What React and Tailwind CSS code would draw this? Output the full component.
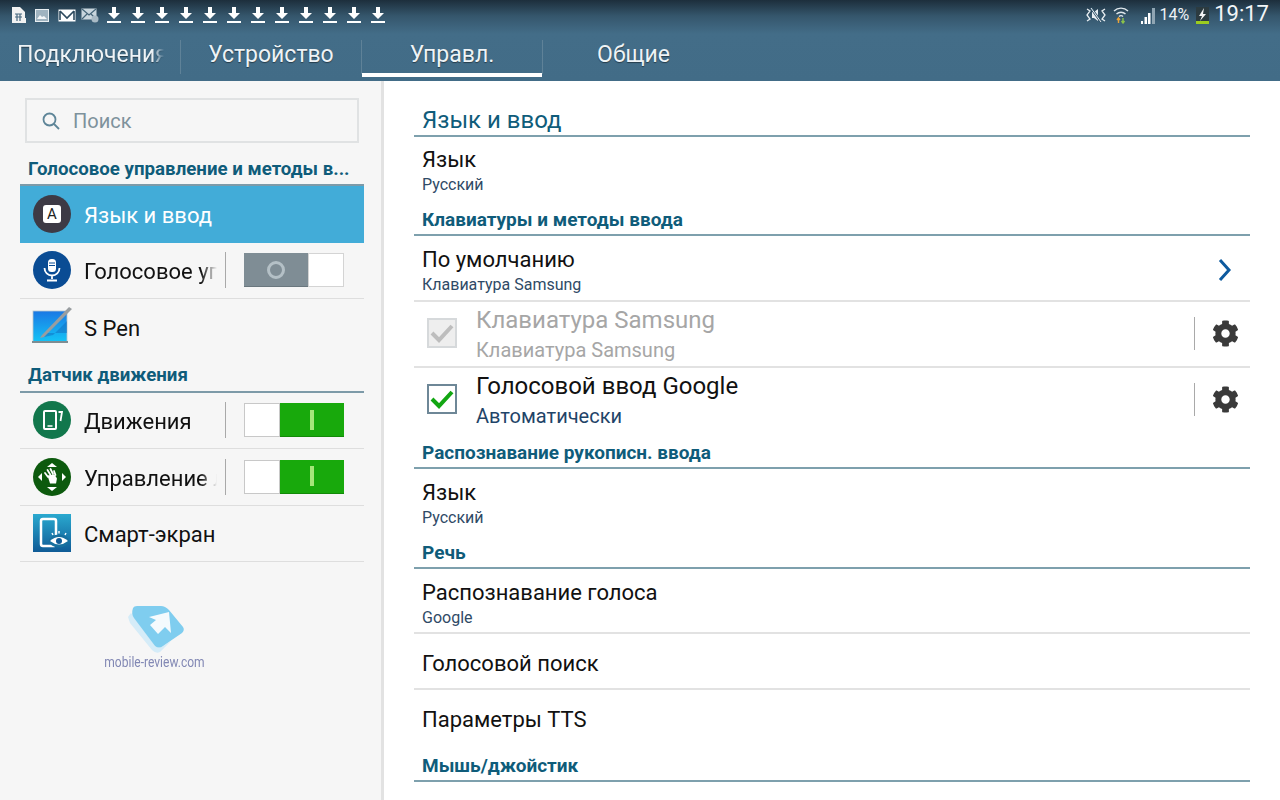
import { FaCog } from "react-icons/fa";

const downloads = Array.from({ length: 12 }, (_, i) => i);

function DownloadIcon() {
  return (
    <svg width="14" height="18" viewBox="0 0 14 18" className="shrink-0">
      <path d="M5 1h4v6h4l-6 6-6-6h4z" fill="#fff" />
      <rect x="0" y="15" width="14" height="2" fill="#fff" />
    </svg>
  );
}

function StatusBar() {
  return (
    <div className="flex h-[30px] items-center justify-between pl-[11px] pr-[11px]">
      <div className="flex items-center">
        <svg width="16" height="18" viewBox="0 0 16 18" className="mr-[8px]">
          <path d="M1 1h8l5 5v11H1z" fill="#f2f2f2" />
          <path d="M4 8h7M4 11h7M6 8v7M9 8v7" stroke="#47687f" strokeWidth="1.2" />
          <rect x="13" y="12" width="2" height="5" fill="#f2f2f2" />
        </svg>
        <svg width="14" height="13" viewBox="0 0 14 13" className="mr-[9px]">
          <rect x="0.5" y="0.5" width="13" height="12" fill="#9fb3c0" stroke="#e8eef2" />
          <path d="M2 10l3-4 2 2 2-1 3 3z" fill="#f2f5f7" />
        </svg>
        <svg width="18" height="13" viewBox="0 0 18 13" className="mr-[5px]">
          <rect x="0.5" y="0.5" width="17" height="12" fill="#fff" />
          <path d="M2 2v9M16 2v9M2 2l7 7 7-7" stroke="#2d4a5e" strokeWidth="1.6" fill="none" />
        </svg>
        <svg width="18" height="15" viewBox="0 0 18 15" className="mr-[8px]">
          <rect x="0.5" y="0.5" width="15" height="11" fill="#c9d6de" />
          <path d="M1 1l7 6 7-6M1 11l5-5M15 11l-5-5" stroke="#456579" strokeWidth="1.2" fill="none" />
          <circle cx="14" cy="11" r="3.5" fill="#a9bac5" />
        </svg>
        <div className="flex gap-[10px]">
          {downloads.map((i) => (
            <DownloadIcon key={i} />
          ))}
        </div>
      </div>
      <div className="flex items-center">
        <svg width="20" height="16" viewBox="0 0 20 16" className="mr-[7px]">
          <path d="M1 2l3 2-3 4 3 4-3 2M19 2l-3 2 3 4-3 4 3 2" stroke="#e8eef2" strokeWidth="1.3" fill="none" />
          <path d="M6 5h2l4-3v12l-4-3H6z" fill="#e8eef2" />
          <path d="M5 1l10 14" stroke="#35566c" strokeWidth="2.4" />
          <path d="M5 1l10 14" stroke="#e8eef2" strokeWidth="1" />
        </svg>
        <svg width="16" height="18" viewBox="0 0 16 18" className="mr-[11px]">
          <path d="M1 5a10 10 0 0 1 14 0M3.5 8a6.5 6.5 0 0 1 9 0M6 10.500a3 3 0 0 1 4 0" stroke="#dfe7ec" strokeWidth="1.4" fill="none" />
          <path d="M5.500 12v5M4 14l1.500-2 1.500 2" stroke="#e8a33a" strokeWidth="1.4" fill="none" />
          <path d="M10 12v5M8.500 15l1.500 2 1.500-2" stroke="#8bc24a" strokeWidth="1.4" fill="none" />
        </svg>
        <svg width="16" height="17" viewBox="0 0 16 17" className="mr-[4px]">
          <path d="M1 14h2v3H1zM4.500 10h2.500v7H4.500zM8 6h2.500v11H8z" fill="#fff" />
          <path d="M12 1h3v16h-3z" fill="#8fa5b3" />
        </svg>
        <span className="mr-[6px] text-[16px] leading-none text-[#eef3f6]">14%</span>
        <svg width="15" height="18" viewBox="0 0 15 18" className="mr-[4px]">
          <rect x="1" y="1" width="13" height="16" fill="#2c3b40" />
          <path d="M9 2L4 10h3l-2 5 6-7H8z" fill="#f4f4f4" />
          <rect x="1" y="15" width="13" height="3" fill="#9ccb1e" />
        </svg>
        <span className="pb-[2px] text-[22px] leading-none text-[#f2f6f8]">19:17</span>
      </div>
    </div>
  );
}

function TabDivider() {
  return <div className="mt-[10px] h-[34px] w-px shrink-0 bg-[#5f8298]" />;
}

function Tabs() {
  return (
    <div className="flex h-[51px] text-[23px] text-[#eef3f6] [text-shadow:0_1px_1px_rgba(0,0,0,0.45)]">
      <div className="flex h-[47px] w-[181px]">
        <div className="flex flex-1 items-center pl-[17px] pt-[3px]">
          <span className="w-[147px] overflow-hidden whitespace-nowrap [mask-image:linear-gradient(to_right,black_92%,transparent)]">
            Подключения
          </span>
        </div>
        <TabDivider />
      </div>
      <div className="flex h-[47px] w-[181px]">
        <div className="flex flex-1 items-center justify-center pt-[3px]">Устройство</div>
        <TabDivider />
      </div>
      <div className="flex h-[47px] w-[181px]">
        <div className="flex flex-1 items-center justify-center border-b-4 border-white pt-[7px]">Управл.</div>
        <TabDivider />
      </div>
      <div className="flex h-[47px] w-[181px] items-center justify-center pt-[3px]">Общие</div>
    </div>
  );
}

function Toggle({ on }) {
  if (on) {
    return (
      <div className="flex h-[34px] w-[100px] shrink-0">
        <div className="w-[36px] border border-[#c8c8c8] bg-white" />
        <div className="flex flex-1 items-center justify-center border-b border-[#128a08] bg-[#18a90c]">
          <div className="h-[20px] w-[4px] bg-[#a4e67a]" />
        </div>
      </div>
    );
  }
  return (
    <div className="flex h-[34px] w-[100px] shrink-0">
      <div className="flex w-[64px] items-center justify-center border-b border-[#6a777e] bg-[#7f8d95]">
        <div className="h-[18px] w-[18px] rounded-full border-[3px] border-[#b4c0c6]" />
      </div>
      <div className="flex-1 border border-[#d4d4d4] bg-white" />
    </div>
  );
}

function SideRow({ icon, label, toggle, selected, clip, noBorder }) {
  return (
    <div
      className={
        "flex h-[56.500px] items-center pl-[12px] " +
        (selected ? "bg-[#42acd8] text-white" : "text-[#111] ") +
        (selected || noBorder ? "" : "border-b border-[#dedede]")
      }
    >
      <div className="flex h-[40px] w-[40px] shrink-0 items-center justify-center">{icon}</div>
      <div
        className={
          "ml-[12px] whitespace-nowrap pt-[3px] text-[22px] " +
          (clip ? "w-[133px] overflow-hidden [mask-image:linear-gradient(to_right,black_88%,transparent)]" : "")
        }
      >
        {label}
      </div>
      {toggle !== undefined && (
        <>
          <div className="ml-[8px] h-[36px] w-px shrink-0 bg-[#a9a9a9]" />
          <div className="ml-[18px]">
            <Toggle on={toggle} />
          </div>
        </>
      )}
    </div>
  );
}

function SideHeader({ children, className }) {
  return (
    <div
      className={
        "whitespace-nowrap border-b-2 border-[#7d9aa8] pb-[5px] pl-[8px] text-[18.700px] font-bold leading-[22px] text-[#0f5c7a] " +
        className
      }
    >
      {children}
    </div>
  );
}

function Sidebar() {
  return (
    <div className="flex w-[384px] shrink-0 flex-col border-r-[3px] border-[#e2e2e2] bg-[#f6f6f6] pl-[20px] pr-[17px] pt-[17px]">
      <div className="ml-[5px] mr-[5px] flex h-[45px] items-center border-2 border-[#e0e2e3] pl-[15px]">
        <svg width="18" height="18" viewBox="0 0 18 18" fill="none" stroke="#5e8598" strokeWidth="1.800">
          <circle cx="7.500" cy="7.500" r="6" />
          <path d="M12 12l5 5" />
        </svg>
        <span className="ml-[13px] pt-[1px] text-[20px] text-[#7e929c]">Поиск</span>
      </div>
      <SideHeader className="mt-[14px] pt-[1px] !pb-[4px]">Голосовое управление и методы в...</SideHeader>
      <SideRow
        selected
        label="Язык и ввод"
        icon={
          <div className="flex h-[38px] w-[38px] items-center justify-center rounded-full bg-[#3d3a45]">
            <div className="flex h-[18px] w-[18px] items-center justify-center rounded-[3px] bg-white text-[15px] leading-none text-[#222]">
              A
            </div>
          </div>
        }
      />
      <SideRow
        clip
        toggle={false}
        label="Голосовое управление"
        icon={
          <div className="flex h-[38px] w-[38px] items-center justify-center rounded-full bg-[#0a4c94]">
            <svg width="18" height="24" viewBox="0 0 18 24" fill="none">
              <rect x="5" y="1" width="8" height="13" rx="3.500" fill="#fff" />
              <path d="M6 5h6M6 7.500h6" stroke="#0a4c94" />
              <path d="M1.500 10a7.500 7.500 0 0 0 15 0M9 18v3M4 22.500h10" stroke="#fff" strokeWidth="1.800" />
            </svg>
          </div>
        }
      />
      <SideRow
        noBorder
        label="S Pen"
        icon={
          <svg width="42" height="42" viewBox="0 0 42 42" className="shrink-0">
            <defs>
              <linearGradient id="penBg" x1="0" y1="0" x2="0" y2="1">
                <stop offset="0" stopColor="#1a78e4" />
                <stop offset="1" stopColor="#14c4f6" />
              </linearGradient>
            </defs>
            <rect x="2" y="5" width="34" height="31" fill="url(#penBg)" stroke="#b8c6cc" strokeWidth="0.8" />
            <rect x="1" y="35" width="36" height="2" fill="#7f8d93" />
            <path d="M13 31L22 29 36 15V27H13z" fill="#0f66b8" opacity="0.45" />
            <path d="M11 29L38 1l3 2-28 28-4 1z" fill="#999da0" />
          </svg>
        }
      />
      <SideHeader className="mt-[8px]">Датчик движения</SideHeader>
      <SideRow
        toggle
        clip
        label="Движения"
        icon={
          <div className="flex h-[38px] w-[38px] items-center justify-center rounded-full bg-[#12774c]">
            <svg width="24" height="24" viewBox="0 0 24 24" fill="none" stroke="#fff">
              <rect x="4" y="3" width="12" height="18" rx="1" strokeWidth="2" />
              <path d="M7.500 18h5" strokeWidth="1.500" />
              <path d="M18.500 4H22l-1.500 9" strokeWidth="1.800" />
            </svg>
          </div>
        }
      />
      <SideRow
        toggle
        clip
        label="Управление ладонью"
        icon={
          <div className="flex h-[38px] w-[38px] items-center justify-center rounded-full bg-[#0d5a0e]">
            <svg width="34" height="34" viewBox="0 0 34 34">
              <path d="M12 7l5-4 5 4zM12 27l5 4 5-4zM7 13l-4 4 4 4zM27 13l4 4-4 4z" fill="#fff" />
              <path d="M13 17l-3-4M15.500 15l-3-5M18 14l-2.500-5M20.500 15l-1.500-4" stroke="#fff" strokeWidth="1.800" strokeLinecap="round" />
              <path d="M12.500 15.500l7-1 2.500 4-1 5h-6z" fill="#fff" />
            </svg>
          </div>
        }
      />
      <SideRow
        label="Смарт-экран"
        icon={
          <svg width="38" height="38" viewBox="0 0 38 38">
            <defs>
              <linearGradient id="smartBg" x1="0" y1="0" x2="0" y2="1">
                <stop offset="0" stopColor="#2aa9cf" />
                <stop offset="1" stopColor="#0f5b96" />
              </linearGradient>
            </defs>
            <rect x="0" y="0" width="38" height="38" fill="url(#smartBg)" />
            <rect x="8" y="5" width="15" height="27" rx="2" fill="none" stroke="#fff" strokeWidth="2.500" />
            <ellipse cx="26" cy="27" rx="10" ry="6.500" fill="#17709f" />
            <path d="M17 27q9-8 18 0q-9 7-18 0z" fill="#fff" />
            <circle cx="26" cy="27" r="3" fill="#0f5b96" />
            <path d="M20 21l-1-2M26 19.500V17M32 21l1-2" stroke="#fff" strokeWidth="1.400" />
          </svg>
        }
      />
      <div className="mt-[43px] flex flex-col items-center pr-[70px]">
        <svg width="60" height="50" viewBox="0 0 60 50">
          <path d="M1 12L4 8l24 33q4 3 8 0l8-5-11 11q-4 2-8-2L3 18z" fill="#d5ecf8" />
          <path d="M6 3q1-2 4-2h24q4 0 8 4l14 17q2 3-1 6L36 41q-4 3-8 0L7 13q-3-4-1-10z" fill="#7fcdef" />
          <path d="M22 12L42 7l2 21-6-6-7 7-8-9 6-5z" fill="#f4fafd" />
        </svg>
        <div className="-mt-[1px] mr-[6px] scale-x-[0.83] whitespace-nowrap text-[14.500px] leading-[18px] text-[#8288b4]">
          mobile-review.com
        </div>
      </div>
    </div>
  );
}

function SectionHeader({ children }) {
  return (
    <div className="h-[34px] border-b-2 border-[#7ea0ad] pl-[8px] pt-[2px] text-[19px] font-bold leading-[31px] text-[#0f5c7a]">
      {children}
    </div>
  );
}

function SettingRow({ title, sub, chevron, border, className }) {
  return (
    <div className={"flex justify-between pl-[8px] pr-[18px] " + className + (border ? " border-b-2 border-[#e2e2e2]" : "")}>
      <div>
        <div className="text-[22px] leading-[26px] text-[#111]">{title}</div>
        {sub && <div className="text-[16px] leading-[24px] text-[#2f4a66]">{sub}</div>}
      </div>
      {chevron && (
        <svg width="14" height="24" viewBox="0 0 14 24" fill="none" stroke="#0d5a9e" strokeWidth="3" className="-mt-[8px] self-center">
          <path d="M2 2l9 10-9 10" />
        </svg>
      )}
    </div>
  );
}

function CheckRow({ title, sub, disabled, border, className }) {
  return (
    <div className={"flex pl-[13px] pr-[11px] pt-[2px] " + className + (border ? " border-b-2 border-[#e2e2e2]" : "")}>
      <div
        className={
          "mt-[14px] flex h-[30px] w-[30px] shrink-0 items-center justify-center border-2 " +
          (disabled ? "border-[#d6d9db] bg-[#eeeeee]" : "border-[#6e8797] bg-white")
        }
      >
        <svg width="26" height="22" viewBox="0 0 26 22" fill="none" stroke={disabled ? "#bdbdbd" : "#12a612"} strokeWidth="4">
          <path d="M3 11l7 7L23 4" />
        </svg>
      </div>
      <div className="ml-[19px] flex-1">
        <div className={"text-[24px] leading-[32px] " + (disabled ? "text-[#a6a6a6]" : "text-[#111]")}>{title}</div>
        <div className={"text-[20px] leading-[28px] " + (disabled ? "text-[#a6a6a6]" : "text-[#1f4468]")}>{sub}</div>
      </div>
      <div className="mt-[13px] h-[33px] w-px bg-[#a9a9a9]" />
      <FaCog className="ml-[17px] mt-[16px] text-[27px] text-[#3a3a3a]" />
    </div>
  );
}

function Content() {
  return (
    <div className="min-w-0 flex-1 overflow-hidden bg-white pl-[30px] pr-[30px] pt-[24px]">
      <div className="h-[32px] border-b-2 border-[#7ea0ad] pl-[8px] text-[24px] leading-[30px] text-[#0f5c7a]">Язык и ввод</div>
      <SettingRow title="Язык" sub="Русский" className="h-[65px] pt-[10px]" />
      <SectionHeader>Клавиатуры и методы ввода</SectionHeader>
      <SettingRow title="По умолчанию" sub="Клавиатура Samsung" chevron border className="h-[66px] pt-[11px]" />
      <CheckRow disabled border title="Клавиатура Samsung" sub="Клавиатура Samsung" className="h-[66px]" />
      <CheckRow title="Голосовой ввод Google" sub="Автоматически" className="h-[67px]" />
      <SectionHeader>Распознавание рукописн. ввода</SectionHeader>
      <SettingRow title="Язык" sub="Русский" className="h-[66px] pt-[11px]" />
      <SectionHeader>Речь</SectionHeader>
      <SettingRow title="Распознавание голоса" sub="Google" border className="h-[65px] pt-[11px]" />
      <SettingRow title="Голосовой поиск" border className="h-[56px] pt-[17px]" />
      <SettingRow title="Параметры TTS" className="h-[58px] pt-[17px]" />
      <SectionHeader>Мышь/джойстик</SectionHeader>
    </div>
  );
}

export default function App() {
  return (
    <div className="flex h-[800px] w-[1280px] flex-col overflow-hidden font-['Roboto',sans-serif]">
      <div className="h-[81px] shrink-0 bg-[linear-gradient(to_bottom,#1d2e3c_0px,#35566c_16px,#436d88_34px,#426c87_100%)]">
        <StatusBar />
        <Tabs />
      </div>
      <div className="flex min-h-0 flex-1">
        <Sidebar />
        <Content />
      </div>
    </div>
  );
}
